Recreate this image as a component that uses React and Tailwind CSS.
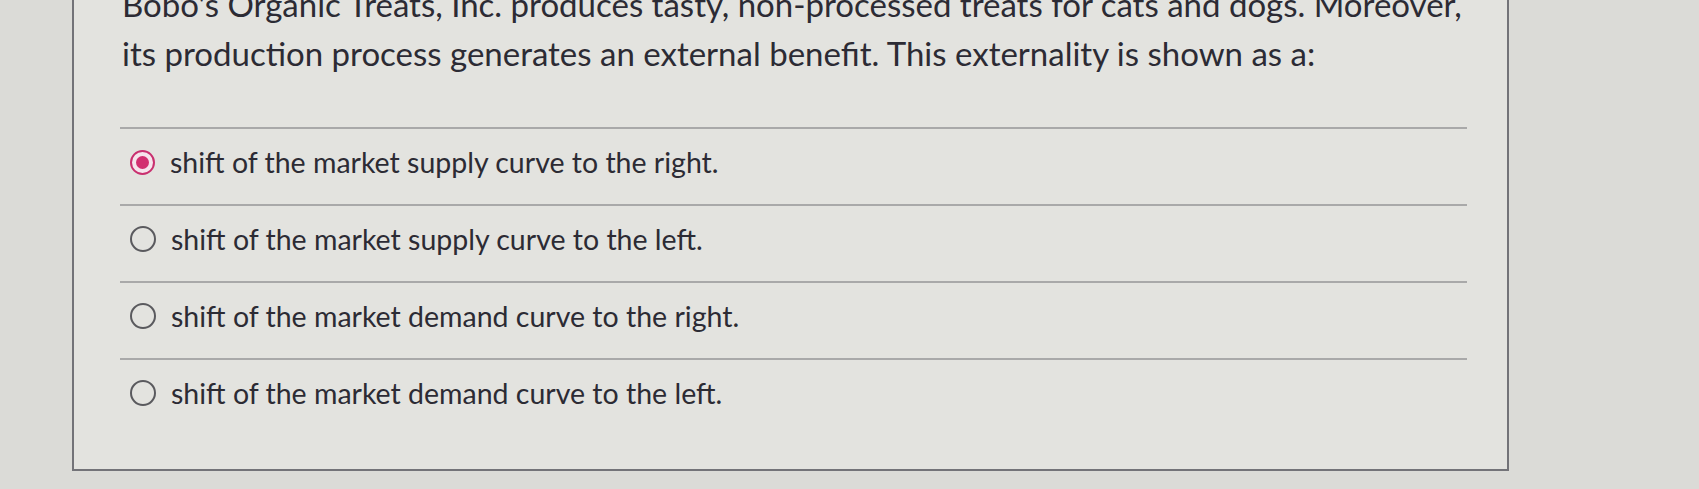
import React, { useState } from "react";

const options = [
    "shift of the market supply curve to the right.",
    "shift of the market supply curve to the left.",
    "shift of the market demand curve to the right.",
    "shift of the market demand curve to the left.",
];

function Radio({ checked }) {
    if (checked) {
        return (
            <span className="flex h-[25px] w-[25px] shrink-0 items-center justify-center rounded-full border-2 border-[#c9306f] bg-[#f6e4ec]">
                <span className="h-[13px] w-[13px] rounded-full bg-[#d22f70]" />
            </span>
        );
    }
    return <span className="h-[26px] w-[26px] shrink-0 rounded-full border-2 border-[#5a5a5e]" />;
}

export default function App() {
    const [selected, setSelected] = useState(0);

    return (
        <div className="h-[489px] w-full overflow-hidden bg-[#dbdbd7] font-['Lato','Liberation_Sans',sans-serif] text-[#2c2b34]">
            <div className="ml-[72px] mt-[-50px] w-[1437px] border-2 border-[#737378] bg-[#e3e3df] pb-[34px] pl-[46px] pr-[40px] pt-[28px]">
                <p className="pl-[2px] text-[33px] leading-[49px]">
                    Bobo's Organic Treats, Inc. produces tasty, non-processed treats for cats and dogs. Moreover,
                    <br />
                    its production process generates an external benefit. This externality is shown as a:
                </p>
                <ul className="mt-[49px]">
                    {options.map((text, i) => (
                        <li key={i} className="border-t-2 border-[#a9a9a9]">
                            <button
                                type="button"
                                onClick={() => setSelected(i)}
                                className="flex w-full items-center gap-[15px] pb-[26px] pl-[10px] pt-[17px] text-left"
                            >
                                <Radio checked={selected === i} />
                                <span className="text-[28.5px] leading-[32px]">{text}</span>
                            </button>
                        </li>
                    ))}
                </ul>
            </div>
        </div>
    );
}
